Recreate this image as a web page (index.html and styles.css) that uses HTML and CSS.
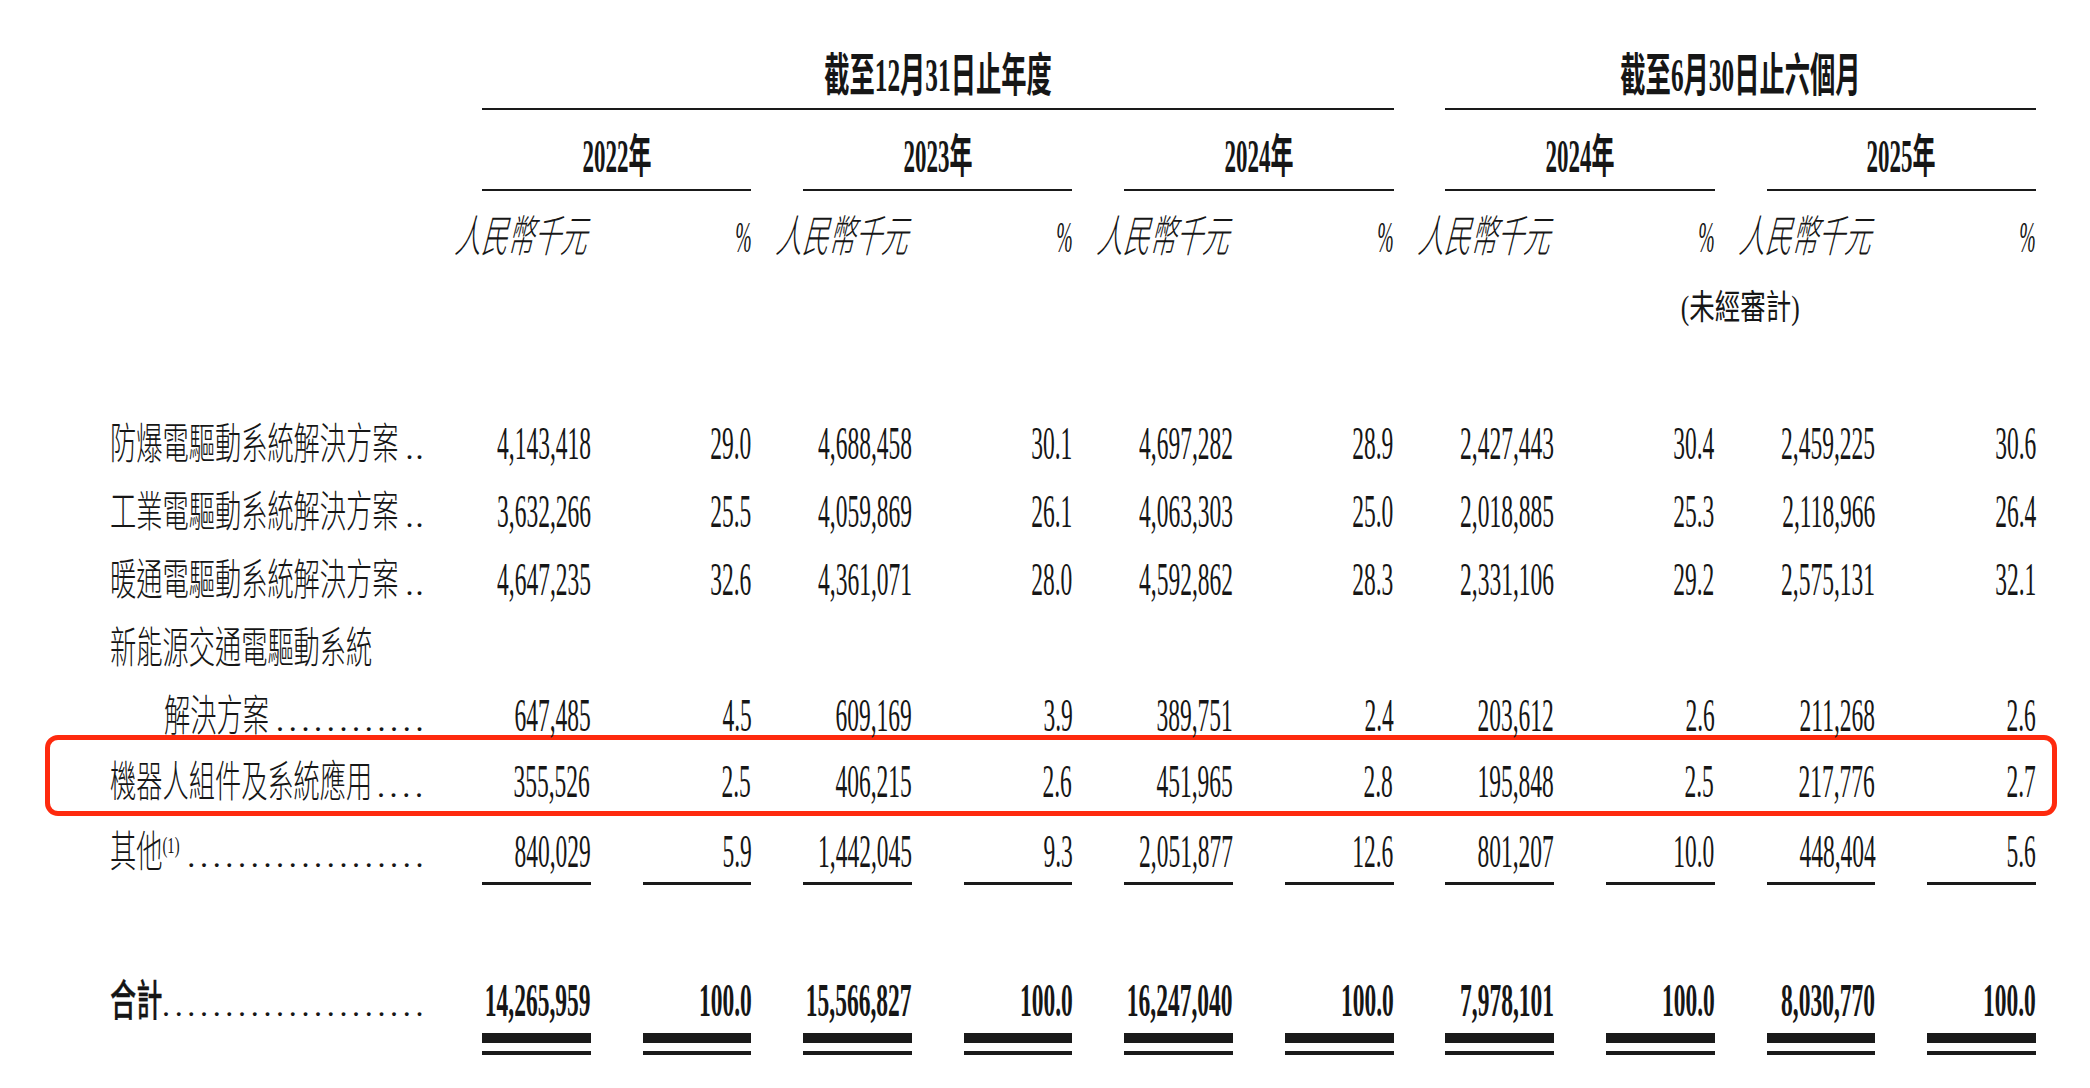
FILE: index.html
```html
<!DOCTYPE html>
<html lang="zh-Hant">
<head>
<meta charset="utf-8">
<title>收入明細</title>
<link rel="stylesheet" href="styles.css">
</head>
<body>
<div class="sheet">
  <div class="row r-period">
    <div class="lab"></div>
    <div class="hc sp6"><span class="t hb">截至12月31日止年度</span></div>
    <div class="hc sp4"><span class="t hb">截至6月30日止六個月</span></div>
  </div>
  <div class="row r-year">
    <div class="lab"></div>
    <div class="hc sp2"><span class="t yr">2022年</span></div>
    <div class="hc sp2"><span class="t yr">2023年</span></div>
    <div class="hc sp2"><span class="t yr">2024年</span></div>
    <div class="hc sp2"><span class="t yr">2024年</span></div>
    <div class="hc sp2"><span class="t yr">2025年</span></div>
  </div>
  <div class="row r-unit">
    <div class="lab"></div>
    <div class="num"><span class="t unit">人民幣千元</span></div><div class="num"><span class="t pct">%</span></div>
    <div class="num"><span class="t unit">人民幣千元</span></div><div class="num"><span class="t pct">%</span></div>
    <div class="num"><span class="t unit">人民幣千元</span></div><div class="num"><span class="t pct">%</span></div>
    <div class="num"><span class="t unit">人民幣千元</span></div><div class="num"><span class="t pct">%</span></div>
    <div class="num"><span class="t unit">人民幣千元</span></div><div class="num"><span class="t pct">%</span></div>
  </div>
  <div class="row r-aud">
    <div class="lab"></div>
    <div class="audc"><span class="t aud">(未經審計)</span></div>
  </div>
  <div class="gap-a"></div>

  <div class="row r-data">
    <div class="lab"><span class="t lt">防爆電驅動系統解決方案</span><span class="dots short">..</span></div>
    <div class="num"><span class="t v">4,143,418</span></div><div class="num"><span class="t v">29.0</span></div>
    <div class="num"><span class="t v">4,688,458</span></div><div class="num"><span class="t v">30.1</span></div>
    <div class="num"><span class="t v">4,697,282</span></div><div class="num"><span class="t v">28.9</span></div>
    <div class="num"><span class="t v">2,427,443</span></div><div class="num"><span class="t v">30.4</span></div>
    <div class="num"><span class="t v">2,459,225</span></div><div class="num"><span class="t v">30.6</span></div>
  </div>
  <div class="row r-data">
    <div class="lab"><span class="t lt">工業電驅動系統解決方案</span><span class="dots short">..</span></div>
    <div class="num"><span class="t v">3,632,266</span></div><div class="num"><span class="t v">25.5</span></div>
    <div class="num"><span class="t v">4,059,869</span></div><div class="num"><span class="t v">26.1</span></div>
    <div class="num"><span class="t v">4,063,303</span></div><div class="num"><span class="t v">25.0</span></div>
    <div class="num"><span class="t v">2,018,885</span></div><div class="num"><span class="t v">25.3</span></div>
    <div class="num"><span class="t v">2,118,966</span></div><div class="num"><span class="t v">26.4</span></div>
  </div>
  <div class="row r-data">
    <div class="lab"><span class="t lt">暖通電驅動系統解決方案</span><span class="dots short">..</span></div>
    <div class="num"><span class="t v">4,647,235</span></div><div class="num"><span class="t v">32.6</span></div>
    <div class="num"><span class="t v">4,361,071</span></div><div class="num"><span class="t v">28.0</span></div>
    <div class="num"><span class="t v">4,592,862</span></div><div class="num"><span class="t v">28.3</span></div>
    <div class="num"><span class="t v">2,331,106</span></div><div class="num"><span class="t v">29.2</span></div>
    <div class="num"><span class="t v">2,575,131</span></div><div class="num"><span class="t v">32.1</span></div>
  </div>
  <div class="row r-data">
    <div class="lab"><span class="t lt">新能源交通電驅動系統</span></div>
  </div>
  <div class="row r-data">
    <div class="lab"><span class="t lt ind">解決方案</span><span class="dots">............</span></div>
    <div class="num"><span class="t v">647,485</span></div><div class="num"><span class="t v">4.5</span></div>
    <div class="num"><span class="t v">609,169</span></div><div class="num"><span class="t v">3.9</span></div>
    <div class="num"><span class="t v">389,751</span></div><div class="num"><span class="t v">2.4</span></div>
    <div class="num"><span class="t v">203,612</span></div><div class="num"><span class="t v">2.6</span></div>
    <div class="num"><span class="t v">211,268</span></div><div class="num"><span class="t v">2.6</span></div>
  </div>
  <div class="row r-data hl">
    <div class="lab"><span class="t lt">機器人組件及系統應用</span><span class="dots">....</span></div>
    <div class="num"><span class="t v">355,526</span></div><div class="num"><span class="t v">2.5</span></div>
    <div class="num"><span class="t v">406,215</span></div><div class="num"><span class="t v">2.6</span></div>
    <div class="num"><span class="t v">451,965</span></div><div class="num"><span class="t v">2.8</span></div>
    <div class="num"><span class="t v">195,848</span></div><div class="num"><span class="t v">2.5</span></div>
    <div class="num"><span class="t v">217,776</span></div><div class="num"><span class="t v">2.7</span></div>
  </div>
  <div class="row r-data r-last">
    <div class="lab"><span class="t lt">其他<sup class="fn">(1)</sup></span><span class="dots">...................</span></div>
    <div class="num"><span class="t v">840,029</span></div><div class="num"><span class="t v">5.9</span></div>
    <div class="num"><span class="t v">1,442,045</span></div><div class="num"><span class="t v">9.3</span></div>
    <div class="num"><span class="t v">2,051,877</span></div><div class="num"><span class="t v">12.6</span></div>
    <div class="num"><span class="t v">801,207</span></div><div class="num"><span class="t v">10.0</span></div>
    <div class="num"><span class="t v">448,404</span></div><div class="num"><span class="t v">5.6</span></div>
  </div>
  <div class="row r-rule">
    <div class="lab"></div>
    <div class="ul"></div><div class="ul"></div><div class="ul"></div><div class="ul"></div><div class="ul"></div>
    <div class="ul"></div><div class="ul"></div><div class="ul"></div><div class="ul"></div><div class="ul"></div>
  </div>
  <div class="gap-b"></div>
  <div class="row r-data r-total">
    <div class="lab"><span class="t lt tot">合計</span><span class="dots">.....................</span></div>
    <div class="num"><span class="t v b">14,265,959</span></div><div class="num"><span class="t v b">100.0</span></div>
    <div class="num"><span class="t v b">15,566,827</span></div><div class="num"><span class="t v b">100.0</span></div>
    <div class="num"><span class="t v b">16,247,040</span></div><div class="num"><span class="t v b">100.0</span></div>
    <div class="num"><span class="t v b">7,978,101</span></div><div class="num"><span class="t v b">100.0</span></div>
    <div class="num"><span class="t v b">8,030,770</span></div><div class="num"><span class="t v b">100.0</span></div>
  </div>
  <div class="row r-dbl">
    <div class="lab"></div>
    <div class="dl"></div><div class="dl"></div><div class="dl"></div><div class="dl"></div><div class="dl"></div>
    <div class="dl"></div><div class="dl"></div><div class="dl"></div><div class="dl"></div><div class="dl"></div>
  </div>
</div>
</body>
</html>
```

FILE: styles.css
```css
* { box-sizing: border-box; }
html, body { margin: 0; padding: 0; background: #ffffff; }
body {
  width: 2090px;
  height: 1088px;
  overflow: hidden;
  color: #161616;
  font-family: "Liberation Serif", "Noto Sans CJK TC", serif;
}

.row {
  display: grid;
  grid-template-columns: 320.1px repeat(10, 108.7px);
  column-gap: 51.9px;
  padding-left: 110px;
}

/* header rows */
.r-period { height: 109.5px; }
.r-year { height: 81px; }
.hc {
  display: flex;
  justify-content: center;
  align-items: flex-end;
  padding-bottom: 9px;
  border-bottom: 2.5px solid #1a1a1a;
}
.sp6 { grid-column: 2 / span 6; }
.sp4 { grid-column: 8 / span 4; }
.sp2 { grid-column: span 2; }

.r-unit { height: 79.5px; padding-top: 20px; align-items: baseline; }
.r-aud { height: 70px; padding-top: 6px; align-items: center; }
.audc { grid-column: 8 / span 4; display: flex; justify-content: center; }
.gap-a { height: 68px; }

/* data rows */
.r-data { height: 68px; padding-top: 10.6px; align-items: baseline; }
.r-last { height: 66px; }
.r-rule { height: 2.5px; }
.ul { background: #1a1a1a; }
.gap-b { height: 80.5px; }
.r-dbl { height: 22px; }
.dl { border-top: 10px solid #1a1a1a; border-bottom: 4px solid #1a1a1a; }

/* highlighted row */
.hl {
  height: 81px;
  margin: -13px 33px 0 45px;
  padding: 17.3px 0 0 59.5px;
  border: 5.5px solid #fe2a0e;
  border-radius: 13px;
}

/* cells */
.lab {
  display: flex;
  align-items: baseline;
  justify-content: space-between;
  padding-right: 2px;
  min-width: 0;
}
.num {
  display: flex;
  justify-content: flex-end;
  align-items: baseline;
  min-width: 0;
}

/* text runs (the source typeface is horizontally condensed) */
.t {
  display: inline-block;
  flex: none;
  white-space: nowrap;
  line-height: 1;
}
.hb {
  font-size: 46px;
  font-weight: 700;
  transform: scaleX(0.55);
}
.yr {
  font-size: 46px;
  font-weight: 700;
  transform: scaleX(0.5);
}
.unit {
  font-family: "Noto Sans CJK TC", "Noto Sans CJK SC", sans-serif;
  font-size: 44px;
  font-weight: 300;
  transform: skewX(-14deg) scaleX(0.6);
  transform-origin: right center;
}
.pct {
  font-family: "Liberation Serif", serif;
  font-style: italic;
  font-size: 44px;
  transform: scaleX(0.45);
  transform-origin: right center;
}
.aud {
  font-size: 34px;
  font-weight: 400;
  transform: scaleX(0.75);
}
.lt {
  width: 0;
  font-family: "Noto Sans CJK TC", "Noto Sans CJK SC", sans-serif;
  font-size: 43px;
  font-weight: 300;
  transform: scaleX(0.61);
  transform-origin: left center;
}
.lt.ind { margin-left: 54px; }
.lt.tot { font-weight: 500; -webkit-text-stroke: 0.3px #161616; }
.fn {
  font-family: "Liberation Serif", serif;
  font-size: 24px;
  line-height: 0;
  vertical-align: 14px;
}
.v {
  font-family: "Liberation Serif", serif;
  font-size: 47px;
  transform: scaleX(0.5);
  transform-origin: right center;
}
.v.b { font-weight: 700; }
.dots {
  font-family: "Liberation Serif", serif;
  font-size: 32px;
  line-height: 1;
  letter-spacing: 4.67px;
  white-space: nowrap;
}
.dots.short { letter-spacing: 2px; margin-right: 2.6px; }
```
